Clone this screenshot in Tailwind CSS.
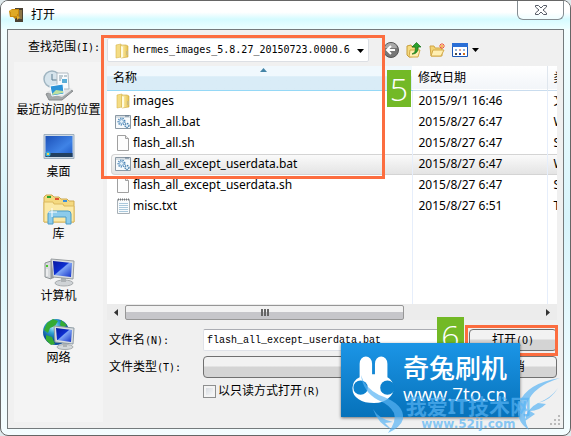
<!DOCTYPE html>
<html lang="zh-CN">
<head>
  <meta charset="UTF-8" />
  <meta name="viewport" content="width=device-width, initial-scale=1.0"/>
  <title>打开</title>
  <script src="https://cdn.jsdelivr.net/npm/@tailwindcss/browser@4"></script>
</head>
<body class="bg-[#dfe9ec] text-black text-[12px] leading-4 font-['Noto_Sans','Noto_Sans_CJK_SC',sans-serif]">
  <!-- shared icons -->
  <svg class="absolute size-0">
    <defs>
      <linearGradient id="gold" x1="0" x2="1"><stop offset="0" stop-color="#fff3b5"/><stop offset="1" stop-color="#e5c04e"/></linearGradient>
      <linearGradient id="screen" x1="0" x2="1" y2="1"><stop offset="0" stop-color="#0717a0"/><stop offset=".45" stop-color="#0d2fd0"/><stop offset=".5" stop-color="#7ea4f5"/><stop offset="1" stop-color="#1230c8"/></linearGradient>
      <linearGradient id="desk" x1="0" x2="1" y2="1"><stop offset="0" stop-color="#1c50b8"/><stop offset=".6" stop-color="#3f83e6"/><stop offset="1" stop-color="#1b55c4"/></linearGradient>
      <radialGradient id="globe" cx=".4" cy=".3"><stop offset="0" stop-color="#b7f0ff"/><stop offset=".5" stop-color="#2f9fd0"/><stop offset="1" stop-color="#0c4d9c"/></radialGradient>
      <symbol id="folder" viewBox="0 0 16 16">
        <path d="M2 2l5-1v13l-5 1z" fill="#f4dc84" stroke="#d9b64c" stroke-width=".6"/>
        <path d="M7 2h5l2 1v11l-7 1z" fill="url(#gold)" stroke="#cfa93f" stroke-width=".6"/>
        <path d="M7 3v12l2-1V4z" fill="#fffbe0"/><path d="M12 8h2v4h-2z" fill="#cdbb78"/>
      </symbol>
      <symbol id="bat" viewBox="0 0 16 16">
        <path d="M.5 1.500h15v13H.5z" fill="#f7fafc" stroke="#8b99a5"/>
        <path d="M1 3h14" stroke="#b7c3cc"/><path d="M10 2h4" stroke="#5d7387"/>
        <circle cx="6.500" cy="7.500" r="3.300" fill="none" stroke="#4d87b8" stroke-width="1.500" stroke-dasharray="1.300 1"/>
        <circle cx="6.500" cy="7.500" r="2" fill="#e3f0f9" stroke="#7fabcf"/>
        <circle cx="12" cy="11.500" r="2" fill="#e3f0f9" stroke="#4a80ad" stroke-width="1.300" stroke-dasharray="1.400 .7"/>
      </symbol>
      <symbol id="page" viewBox="0 0 16 16">
        <path d="M2.500.5h8l3 3v12h-11z" fill="#fdfdfd" stroke="#a0a0a0"/><path d="M10.500.5v3h3" fill="#e8e8e8" stroke="#a0a0a0"/>
      </symbol>
      <symbol id="note" viewBox="0 0 16 16">
        <path d="M2.500 1.500h12v14h-12z" fill="#f8fbfd" stroke="#a8b0b6"/>
        <path d="M4 5.500h9M4 7.500h9M4 9.500h9M4 11.500h9M4 13.500h9" stroke="#a9c8dc"/>
        <path d="M3 1.500h11" stroke="#777" stroke-width="2" stroke-dasharray="1 1"/>
      </symbol>
    </defs>
  </svg>

  <div class="relative flex flex-col min-h-screen rounded-lg border border-[#666] px-1.5 pb-1.5 overflow-hidden bg-linear-to-b from-[#f6ffff] via-[#d8f4fb] to-[#f4fdff]">
    <header class="flex h-7 items-center gap-1.5 -mx-1.5 pl-2 bg-linear-to-b from-white from-40% via-[#d5fbff] via-65% to-[#edffff]">
      <svg class="size-4" viewBox="0 0 16 16">
        <path d="M6 1h8v14H6z" fill="#4b4233"/><path d="M8 3h5v9H8z" fill="#8d7646"/>
        <path d="M0 4l3-2h7v7l-4 3-2-2H1z" fill="#c98a0c"/><path d="M1 4h8M2 6h7M2 8h6" stroke="#f5c93e"/>
        <path d="M8 9l3 1-3 3z" fill="#e8b027"/>
      </svg>
      <h1 class="flex-1">打开</h1>
      <button aria-label="关闭" class="self-start mr-1.5 flex h-[19px] w-[47px] items-center justify-center rounded-b-md border border-t-0 border-[#858d92] bg-white/60">
        <svg class="h-[10px] w-3" viewBox="0 0 12 10"><path d="M.5.5h3L6 3 8.500.5h3v1.500L8 5l3.500 3v1.500h-3L6 7 3.500 9.500h-3V8L4 5 .5 2z" fill="#fff" stroke="#555b66"/></svg>
      </button>
    </header>

    <main class="flex flex-1 flex-col border border-[#747a7c] bg-[#f0f0f0] px-1.5 pb-1.5">
      <div class="flex h-8 items-end">
        <label for="dir" class="w-[93px] pl-3.5 pb-1.5 whitespace-nowrap font-['DejaVu_Sans_Mono','Noto_Sans_CJK_SC',monospace]">查找范围<span class="text-[10px]">(I):</span></label>
        <div class="relative h-6 w-[262px] rounded-xs border border-[#dcdfe4] bg-white">
          <svg class="absolute left-1.5 top-1 size-4"><use href="#folder"/></svg>
          <select id="dir" class="h-full w-full appearance-none pl-[25px] pr-4 text-[10px] outline-none font-['DejaVu_Sans_Mono',monospace]">
            <option>hermes_images_5.8.27_20150723.0000.6</option>
          </select>
          <svg class="pointer-events-none absolute right-1 top-2.5 h-1 w-[7px]" viewBox="0 0 7 4"><path d="M0 0h7L3.500 4z"/></svg>
        </div>
        <nav class="flex items-center gap-1.5 pl-3.5 pb-1">
          <button aria-label="后退"><svg class="size-4" viewBox="0 0 16 16"><circle cx="8" cy="8" r="7.500" fill="#777" stroke="#555"/><path d="M2 6a6 5 0 0 1 12 0z" fill="#aaa"/><path d="M8 4L4 8l4 4M4 8h8" fill="none" stroke="#fff" stroke-width="2"/></svg></button>
          <button aria-label="向上" class="pl-px"><svg class="size-4" viewBox="0 0 16 16"><path d="M1 4l4-1 1 2h6v9l-9 1-2-2z" fill="#f6dc80" stroke="#c69c3a"/><path d="M4 8h10l-2 7H3z" fill="#ffeeb0" stroke="#d3aa49"/><path d="M6 12c3-1 4-4 3-7H6l4.500-4.500L15 5h-3c0 4-1 7-6 7z" fill="#2ca02c" stroke="#147015" stroke-width=".7"/></svg></button>
          <button aria-label="新建文件夹" class="pl-px"><svg class="size-4" viewBox="0 0 16 16"><path d="M1 4h4l1 2h7v8H2z" fill="#f3d474" stroke="#d1a544"/><path d="M4 8h11l-3 6H2z" fill="#ffefb2" stroke="#d3aa49"/><path d="M13 1v6M10 4h6M11 2l4 4M15 2l-4 4" stroke="#ef5b38"/><circle cx="13" cy="4" r="1" fill="#ffe05a"/></svg></button>
          <button aria-label="查看" class="flex items-center gap-1 pl-px"><svg class="size-4" viewBox="0 0 16 16"><path d="M.5 1.500h15v13H.5z" fill="#fff" stroke="#1c57b5"/><path d="M0 1h16v4H0z" fill="#2a6fd6"/><path d="M3 7h2v2H3zM11 7h2v2h-2z" fill="#8fb2dd"/><path d="M7 7h2v2H7z" fill="#d8a29a"/><path d="M3 11h2v2H3z" fill="#4a4a4a"/><path d="M7 11h2v2H7z" fill="#1740a5"/><path d="M11 11h2v2h-2z" fill="#d36b19"/></svg>
            <svg class="h-1 w-[7px]" viewBox="0 0 7 4"><path d="M0 0h7L3.500 4z"/></svg></button>
        </nav>
      </div>

      <div class="flex flex-1 gap-1">
        <aside class="flex w-[89px] shrink-0 flex-col bg-[#f4f4f4] pt-2">
          <a href="#" class="flex h-[62px] flex-col items-center whitespace-nowrap">
            <svg class="size-8 shrink-0" viewBox="0 0 32 32"><path d="M3 24l14-7 13 4-11 9H6z" fill="#a4a8aa" stroke="#85898b"/><path d="M3 22l14-6 13 3-11 8z" fill="#e2e4e5"/><circle cx="9" cy="9" r="8" fill="#d6e4ec" stroke="#9fb4c0" stroke-width="1.500"/><path d="M9 4v6h5" fill="none" stroke="#5b7c90"/><path d="M14 3h11l1 16H14z" fill="#f8fbfd" stroke="#b2bcc3"/><path d="M16 6h4M16 8h3M21 6h3M16 10h2" stroke="#8399a6"/><path d="M19 9h5v4h-5z" fill="#5aaed8"/><path d="M7 16l13-2 1 10-12 2z" fill="#2d94d8" stroke="#fff"/><path d="M9 24l4-4 7 1v2l-11 2z" fill="#bde0a0"/></svg>
            最近访问的位置</a>
          <a href="#" class="flex h-[62px] flex-col items-center">
            <svg class="size-8 shrink-0" viewBox="0 0 32 32"><path d="M1 2.500h30v24H1z" fill="#cfdae4" stroke="#9fb0bf"/><path d="M2.500 4h27v21h-27z" fill="url(#desk)"/><path d="M2.500 21h27v4h-27z" fill="#22405f"/><circle cx="5" cy="22" r="2.500" fill="#36b0d8"/><path d="M4 21h2v2H4z" fill="#f5d451"/></svg>
            桌面</a>
          <a href="#" class="flex h-[62px] flex-col items-center">
            <svg class="size-8 shrink-0" viewBox="0 0 32 32"><path d="M1 3l2-2h6l2 2h5l2 2h6l2 2h5v21H1z" fill="#f4d980" stroke="#cfaa50"/><path d="M4 2h4v2H4z" fill="#29a329"/><path d="M12 4h4v2h-4z" fill="#e0522f"/><path d="M20 6h4v2h-4z" fill="#3c8fd8"/><path d="M1 8h9l1 2h9l1 2h10v16H1z" fill="#fbe9a6" stroke="#dcb95e"/><path d="M5 30V20q0-3 3-3h17q3 0 3 3v10h-5v-7H10v7z" fill="#8ccbeb" stroke="#4d9cc5"/><path d="M9 14v9M5 18h9" stroke="#fff"/></svg>
            库</a>
          <a href="#" class="flex h-[62px] flex-col items-center">
            <svg class="size-8 shrink-0" viewBox="0 0 32 32"><path d="M2 7l6-2v18l-6-2z" fill="#d7dadc" stroke="#8e9497"/><path d="M8 5l3 1v16l-3 1z" fill="#94999c"/><path d="M3 9h2v2H3z" fill="#48c928"/><path d="M4 13v7" stroke="#fff"/><ellipse cx="21" cy="27" rx="9" ry="3" fill="#cfd3d6" stroke="#a7abad"/><path d="M18 20h5v6h-5z" fill="#adb2b5"/><path d="M8 3l23 2-1 18-20-2z" fill="#d9dde0" stroke="#989da0"/><path d="M10 5l19 2-1 14-17-2z" fill="url(#screen)"/></svg>
            计算机</a>
          <a href="#" class="flex h-[62px] flex-col items-center">
            <svg class="size-8 shrink-0" viewBox="0 0 32 32"><circle cx="13" cy="14" r="13" fill="url(#globe)"/><path d="M4 5l6-4 5 2-3 5-5 2-2 5-4-3zM3 17l6 2 3 7-4 1-5-5zM18 2l6 5-4 3-3-3z" fill="#35ab34"/><ellipse cx="22" cy="29" rx="8" ry="2.500" fill="#d4d8da" stroke="#a7abad"/><path d="M20 24h4v5h-4z" fill="#adb2b5"/><path d="M11 8l20 2-1 16-18-2z" fill="#d9dde0" stroke="#8d9ba4"/><path d="M13 10l16 2-1 12-14-2z" fill="url(#screen)"/></svg>
            网络</a>
        </aside>

        <div class="flex min-w-0 flex-1 flex-col pt-1">
          <section class="flex flex-1 flex-col overflow-hidden bg-white">
            <table class="w-full flex-1 table-fixed border-collapse text-left whitespace-nowrap">
              <thead>
                <tr class="h-6 border-b border-[#c9dcee] bg-linear-to-b from-white to-[#f2f5f9]">
                  <th class="relative border-b border-[#95d8f6] bg-linear-to-b from-[#f0f8fd] from-40% to-[#d9ecf7] to-45% pl-1.5 font-normal">名称
                    <svg class="absolute left-1/2 top-0.5 h-1 w-[7px]" viewBox="0 0 7 4"><path d="M3.500 0L7 4H0z" fill="#4484a6"/></svg></th>
                  <th class="w-[135px] border-r border-[#dfe6ee] pl-1.5 font-normal">修改日期</th>
                  <th class="w-[10px] overflow-hidden pl-1.5 font-normal">类型</th>
                </tr>
              </thead>
              <tbody id="files"></tbody>
            </table>
            <div class="flex h-4 shrink-0 items-center bg-[#ececec]">
              <button aria-label="向左滚动" class="flex w-[18px] justify-center"><svg class="h-[7px] w-1" viewBox="0 0 4 7"><path d="M4 0v7L0 3.500z" fill="#333"/></svg></button>
              <div class="flex-1">
                <div class="flex h-[15px] w-[67.500%] items-center justify-center gap-px rounded-xs border border-[#969696] bg-linear-to-b from-[#f2f2f2] from-45% to-[#c6c6ca] to-50%">
                  <i class="h-[7px] w-0.5 bg-[#666]"></i><i class="h-[7px] w-0.5 bg-[#666]"></i><i class="h-[7px] w-0.5 bg-[#666]"></i>
                </div>
              </div>
              <button aria-label="向右滚动" class="flex w-[18px] justify-center"><svg class="h-[7px] w-1" viewBox="0 0 4 7"><path d="M0 0v7l4-3.500z" fill="#333"/></svg></button>
            </div>
          </section>

          <form class="mt-[9px] mb-[23px] grid grid-cols-[96px_1fr_88px] items-center gap-y-[5px] font-['DejaVu_Sans_Mono','Noto_Sans_CJK_SC',monospace]">
            <label for="name" class="pl-0.5">文件名<span class="text-[10px]">(N):</span></label>
            <input id="name" class="h-[22px] min-w-0 mr-4 rounded-xs border border-[#dfe2e8] border-t-[#abadb3] bg-white px-[3px] text-[10px] outline-none font-['Liberation_Mono',monospace]" value="flash_all_except_userdata.bat"/>
            <button type="button" class="h-[22px] rounded-sm border border-[#707070] bg-linear-to-b from-[#f2f2f2] from-45% to-[#d4d4d4] to-50%">打开<span class="text-[10px]">(O)</span></button>
            <label for="type" class="pl-0.5">文件类型<span class="text-[10px]">(T):</span></label>
            <select id="type" class="h-[22px] min-w-0 mr-4 appearance-none rounded-sm border border-[#707070] bg-linear-to-b from-[#f2f2f2] from-45% to-[#d4d4d4] to-50%"><option></option></select>
            <button type="button" class="h-[22px] rounded-sm border border-[#707070] bg-linear-to-b from-[#f2f2f2] from-45% to-[#d4d4d4] to-50%">取消</button>
            <label class="col-start-2 flex h-4 items-center gap-0.5">
              <input type="checkbox" class="size-[13px] appearance-none border border-[#8e8f8f] bg-linear-to-br from-[#cfd4da] to-white shadow-[inset_0_0_0_2px_#f4f4f4]"/>
              <span>以只读方式打开<span class="text-[10px]">(R)</span></span>
            </label>
          </form>
        </div>
      </div>
    </main>

    <!-- resize grip -->
    <svg class="absolute right-2.5 bottom-2.5 size-[10px]" viewBox="0 0 10 10"><path d="M8 0h2v2H8zM4 4h2v2H4zM8 4h2v2H8zM0 8h2v2H0zM4 8h2v2H4zM8 8h2v2H8z" fill="#bababa"/></svg>

    <!-- step marks -->
    <div class="pointer-events-none absolute left-[100px] top-[34px] h-[144px] w-[284px] border-3 border-[#fc6d3f]"></div>
    <div class="absolute left-[386px] top-[69px] flex h-[37px] w-6 items-center justify-center bg-[#73b926] text-[32px] leading-9 text-white font-['Open_Sans',sans-serif] font-light">5</div>
    <div class="absolute right-[106px] bottom-[81px] flex h-[37px] w-[27px] items-center justify-center bg-[#73b926] text-[32px] leading-9 text-white font-['Open_Sans',sans-serif] font-light">6</div>
    <div class="pointer-events-none absolute right-3 bottom-[79px] h-[31px] w-[93px] border-3 border-[#fc6d3f]"></div>

    <!-- 7to logo -->
    <div class="absolute right-[50px] bottom-[18px] flex h-[74px] w-[179px] items-center gap-1.5 bg-linear-to-b from-[#1b95e6] to-[#0672ba] pl-2.5 text-white shadow-[0_1px_3px_#0008]">
      <svg class="h-[50px] w-[46px] shrink-0" viewBox="0 0 48 50"><path d="M9 22V8a6 7 0 0 1 13 0v11h3V8a6 7 0 0 1 13 0v14a13 13 0 0 1 1 22q-5 5-15 5T8 45A13 13 0 0 1 9 22z" fill="#fff"/><circle cx="10" cy="33" r="7.500" fill="#0d81cd"/><circle cx="38" cy="33" r="7.500" fill="#0d81cd"/></svg>
      <div class="pb-1">
        <div class="text-[26px] leading-8 font-medium">奇兔刷机</div>
        <div class="text-[19px] leading-5 font-['Open_Sans',sans-serif]">www.7to.cn</div>
      </div>
    </div>

    <!-- site watermark -->
    <svg class="pointer-events-none absolute right-[5px] bottom-0 h-[60px] w-[216px]" viewBox="0 0 216 60" preserveAspectRatio="none" fill="#58b4f4" fill-opacity=".7">
      <path d="M12 0q3 12 18 20 26 9 24 24-2 8-15 14 9-12 6-20-4-8-16-13Q14 17 12 0z"/>
      <path d="M24 34q6 10 20 13l-8 1 7 7Q29 49 24 34z"/>
      <path d="M211 3q-26 8-33 25-5 15 2 27-15-10-10-27 8-20 41-25zM209 13q-7 12-20 15l8 1q-7 7-16 7l5 3-10 7q1-12 13-18 13-5 20-15z"/>
    </svg>
    <div class="pointer-events-none absolute right-[39px] bottom-[5px] text-center text-[#58b4f4]/70">
      <div class="text-[21px] leading-6 font-bold">我爱IT技术网</div>
      <div class="text-[12px] leading-3 font-bold font-['DejaVu_Sans',sans-serif]">www.52ij.com</div>
    </div>
  </div>

  <script>
    const files = [
      { icon: 'folder', name: 'images', date: '2015/9/1 16:46', type: '文件夹' },
      { icon: 'bat', name: 'flash_all.bat', date: '2015/8/27 6:47', type: 'Windows 批处理文件' },
      { icon: 'page', name: 'flash_all.sh', date: '2015/8/27 6:47', type: 'SH 文件' },
      { icon: 'bat', name: 'flash_all_except_userdata.bat', date: '2015/8/27 6:47', type: 'Windows 批处理文件', selected: true },
      { icon: 'page', name: 'flash_all_except_userdata.sh', date: '2015/8/27 6:47', type: 'SH 文件' },
      { icon: 'note', name: 'misc.txt', date: '2015/8/27 6:51', type: 'TXT 文件' },
    ];

    const rows = files.map(f => {
      const sel = f.selected ? 'border-[#d4d4d4] bg-linear-to-b from-[#fafafa] to-[#e4e4e4]' : 'border-transparent';
      return `
        <tr class="h-[21px]">
          <td class="border-r border-[#e6eefb] p-0 pl-1">
            <div class="flex h-[21px] items-center gap-0.5 rounded-l-sm border border-r-0 pl-[3px] ${sel}">
              <svg class="size-4 shrink-0"><use href="#${f.icon}"/></svg>${f.name}
            </div>
          </td>
          <td class="border-r border-[#e6eefb] p-0"><div class="flex h-[21px] items-center border-y pl-1.5 ${sel}">${f.date}</div></td>
          <td class="overflow-hidden p-0"><div class="flex h-[21px] items-center border-y pl-1.5 ${sel}">${f.type}</div></td>
        </tr>`;
    }).join('');

    document.getElementById('files').innerHTML = rows +
      '<tr><td class="border-r border-[#e6eefb]"></td><td class="border-r border-[#e6eefb]"></td><td></td></tr>';
  </script>
</body>
</html>
